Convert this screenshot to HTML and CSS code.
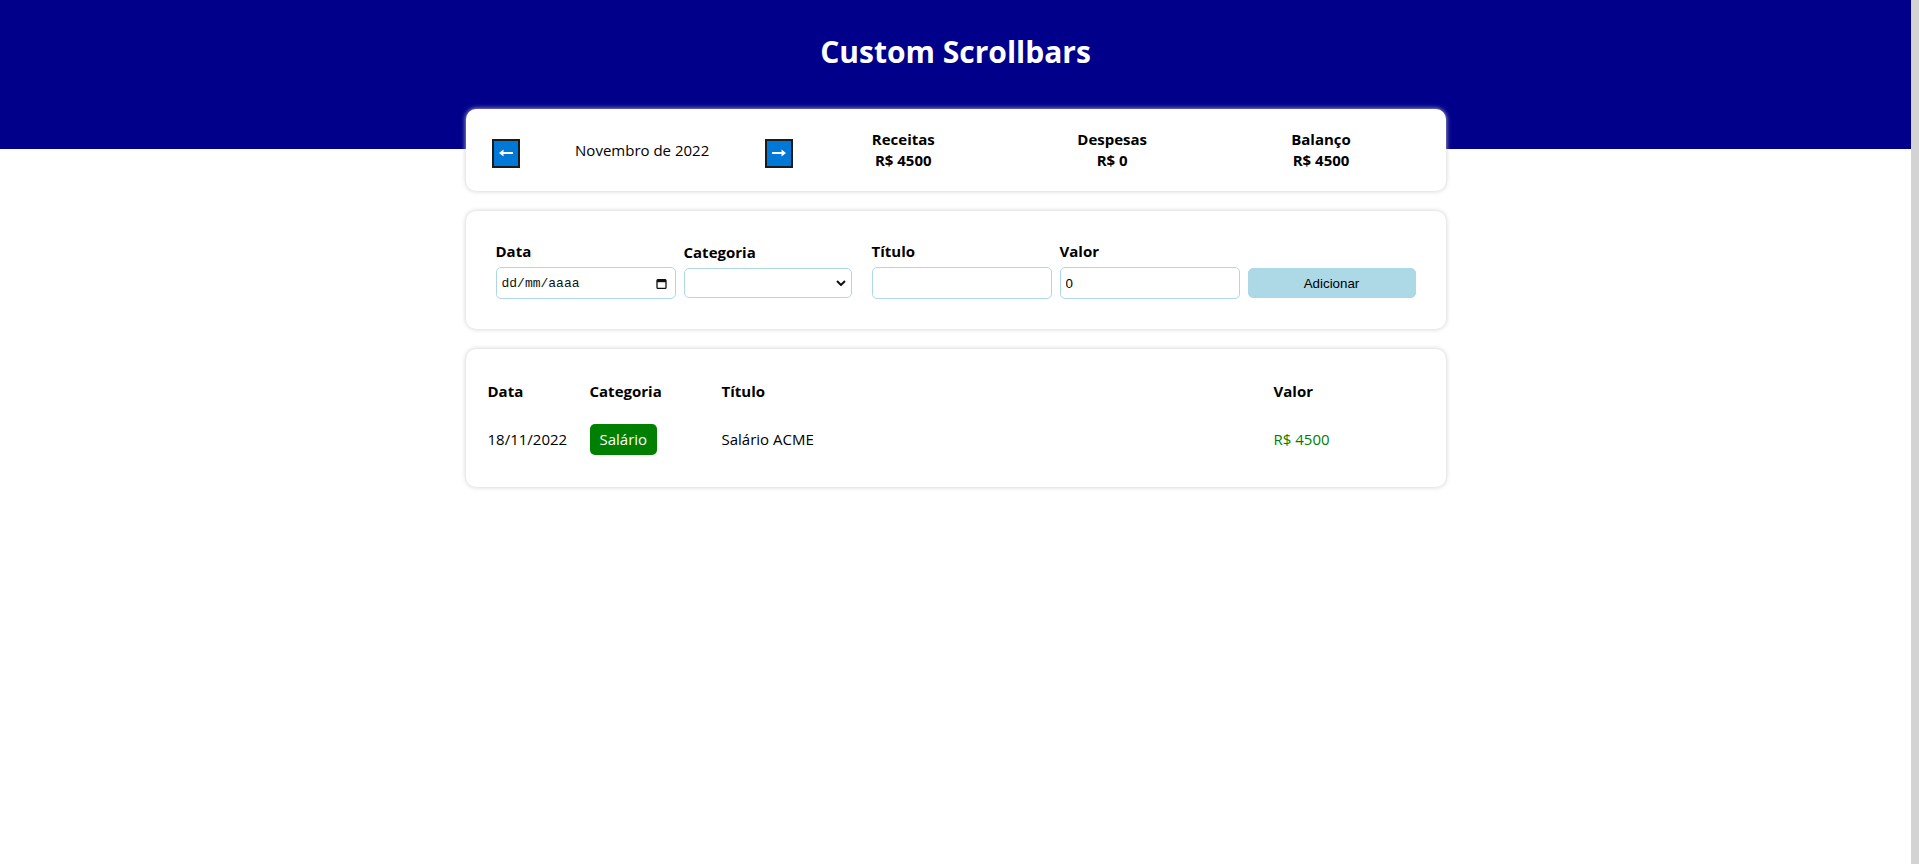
FILE: index.html
```html
<!DOCTYPE html>
<html lang="pt-BR">
<head>
<meta charset="utf-8">
<title>Custom Scrollbars</title>
<link rel="stylesheet" href="styles.css">
</head>
<body>
<div class="page">
  <div class="main">
    <header class="header">
      <h1 class="header-title">Custom Scrollbars</h1>
    </header>
    <div class="content">
      <div class="card info-area">
        <div class="month-area">
          <div class="month-arrow">
            <span class="arrow-btn">
              <svg width="16" height="10" viewBox="0 0 16 10"><path d="M3 5H15" stroke="#fff" stroke-width="2" fill="none"/><path d="M1 5L5.5 1.5V8.5Z" fill="#fff"/></svg>
            </span>
          </div>
          <div class="month-title">Novembro de 2022</div>
          <div class="month-arrow">
            <span class="arrow-btn">
              <svg width="16" height="10" viewBox="0 0 16 10"><path d="M1 5H13" stroke="#fff" stroke-width="2" fill="none"/><path d="M15 5L10.5 1.5V8.5Z" fill="#fff"/></svg>
            </span>
          </div>
        </div>
        <div class="resume-area">
          <div class="resume-item"><div>Receitas</div><div>R$ 4500</div></div>
          <div class="resume-item"><div>Despesas</div><div>R$ 0</div></div>
          <div class="resume-item"><div>Balanço</div><div>R$ 4500</div></div>
        </div>
      </div>

      <div class="card input-area">
        <label class="field">
          <div class="field-title">Data</div>
          <div class="control date-input">
            <span>dd/mm/aaaa</span>
            <svg class="cal-icon" width="11" height="11" viewBox="0 0 11 11"><rect x="1" y="1.6" width="9" height="8.8" rx="1" fill="none" stroke="#111" stroke-width="1.3"/><rect x="1" y="1.6" width="9" height="2.6" fill="#111"/></svg>
          </div>
        </label>
        <label class="field">
          <div class="field-title">Categoria</div>
          <div class="select">
            <svg width="10" height="6" viewBox="0 0 10 6"><path d="M1 1L5 5L9 1" fill="none" stroke="#111" stroke-width="2"/></svg>
          </div>
        </label>
        <label class="field">
          <div class="field-title">Título</div>
          <input class="control" type="text" value="">
        </label>
        <label class="field">
          <div class="field-title">Valor</div>
          <input class="control" type="text" value="0">
        </label>
        <label class="field">
          <div class="field-title">&nbsp;</div>
          <button class="btn" type="button">Adicionar</button>
        </label>
      </div>

      <table class="card table">
        <thead>
          <tr>
            <th class="col-date">Data</th>
            <th class="col-cat">Categoria</th>
            <th>Título</th>
            <th class="col-value">Valor</th>
          </tr>
        </thead>
        <tbody>
          <tr>
            <td>18/11/2022</td>
            <td><span class="badge">Salário</span></td>
            <td>Salário ACME</td>
            <td><span class="value">R$ 4500</span></td>
          </tr>
        </tbody>
      </table>
    </div>
  </div>
  <div class="scrollbar"></div>
</div>
</body>
</html>
```
FILE: styles.css
```css
html, body {
  margin: 0;
  padding: 0;
}

body {
  font-family: "Open Sans", "Noto Sans", sans-serif;
  font-size: 15px;
  line-height: 21px;
  color: #000;
  background: #fff;
}

.page {
  display: flex;
  min-height: 100vh;
}

.main {
  flex: 1;
  min-width: 0;
}

.scrollbar {
  flex: none;
  width: 8px;
  background: #d3d3d3;
}

.header {
  height: 149px;
  background: #00008b;
  text-align: center;
}

.header-title {
  margin: 0;
  padding-top: 31px;
  color: #fff;
  font-size: 30px;
  line-height: 42px;
  font-weight: 700;
}

.content {
  max-width: 980px;
  margin: 0 auto 50px;
}

.card {
  background: #fff;
  box-shadow: 0 0 5px #ccc;
  border-radius: 10px;
  padding: 20px;
}

/* info area */
.info-area {
  margin-top: -40px;
  display: flex;
  align-items: center;
}

.month-area {
  flex: 1;
  display: flex;
  align-items: center;
}

.month-arrow {
  width: 40px;
  display: flex;
  justify-content: center;
}

.arrow-btn {
  width: 24px;
  height: 25px;
  margin-top: 6px;
  border: 2px solid #1b1b1b;
  background: #0078d7;
  display: flex;
  align-items: center;
  justify-content: center;
}

.month-title {
  flex: 1;
  text-align: center;
}

.resume-area {
  flex: 2;
  display: flex;
}

.resume-item {
  flex: 1;
  text-align: center;
  font-weight: 700;
}

/* input area */
.input-area {
  margin-top: 20px;
  display: flex;
  align-items: center;
}

.field {
  flex: 1;
  min-width: 0;
  margin: 10px;
  display: block;
}

.field-title {
  font-weight: 700;
  margin-bottom: 5px;
}

.control {
  display: block;
  box-sizing: content-box;
  width: 100%;
  height: 30px;
  margin: 0;
  padding: 0 5px;
  border: 1px solid #add8e6;
  border-radius: 5px;
  background: #fff;
  font-family: "Liberation Sans", Arial, sans-serif;
  font-size: 13.33px;
  color: #000;
  outline: none;
}

.date-input {
  display: flex;
  align-items: center;
  justify-content: space-between;
  font-family: "Liberation Mono", monospace;
  font-size: 13px;
  color: #111;
}

.cal-icon {
  margin-right: 3px;
}

.select {
  box-sizing: border-box;
  width: 100%;
  height: 30px;
  padding: 0 5px;
  border: 1px solid #add8e6;
  border-radius: 5px;
  background: #fff;
  display: flex;
  align-items: center;
  justify-content: flex-end;
}

.btn {
  display: block;
  box-sizing: border-box;
  width: 100%;
  height: 30px;
  margin: 0;
  padding: 0 5px;
  border: 1px solid #add8e6;
  border-radius: 5px;
  background: #add8e6;
  color: #000;
  font-family: "Liberation Sans", Arial, sans-serif;
  font-size: 13.33px;
}

/* table */
.table {
  width: 100%;
  margin-top: 20px;
  border-spacing: 2px;
}

.table th {
  padding: 10px 0;
  text-align: left;
  font-weight: 700;
}

.table td {
  padding: 10px 0;
}

.col-date { width: 100px; }
.col-cat { width: 130px; }
.col-value { width: 150px; }

.badge {
  display: inline-block;
  padding: 5px 10px;
  border-radius: 5px;
  color: #fff;
  background: #008000;
}

.value {
  color: #008000;
}
```
